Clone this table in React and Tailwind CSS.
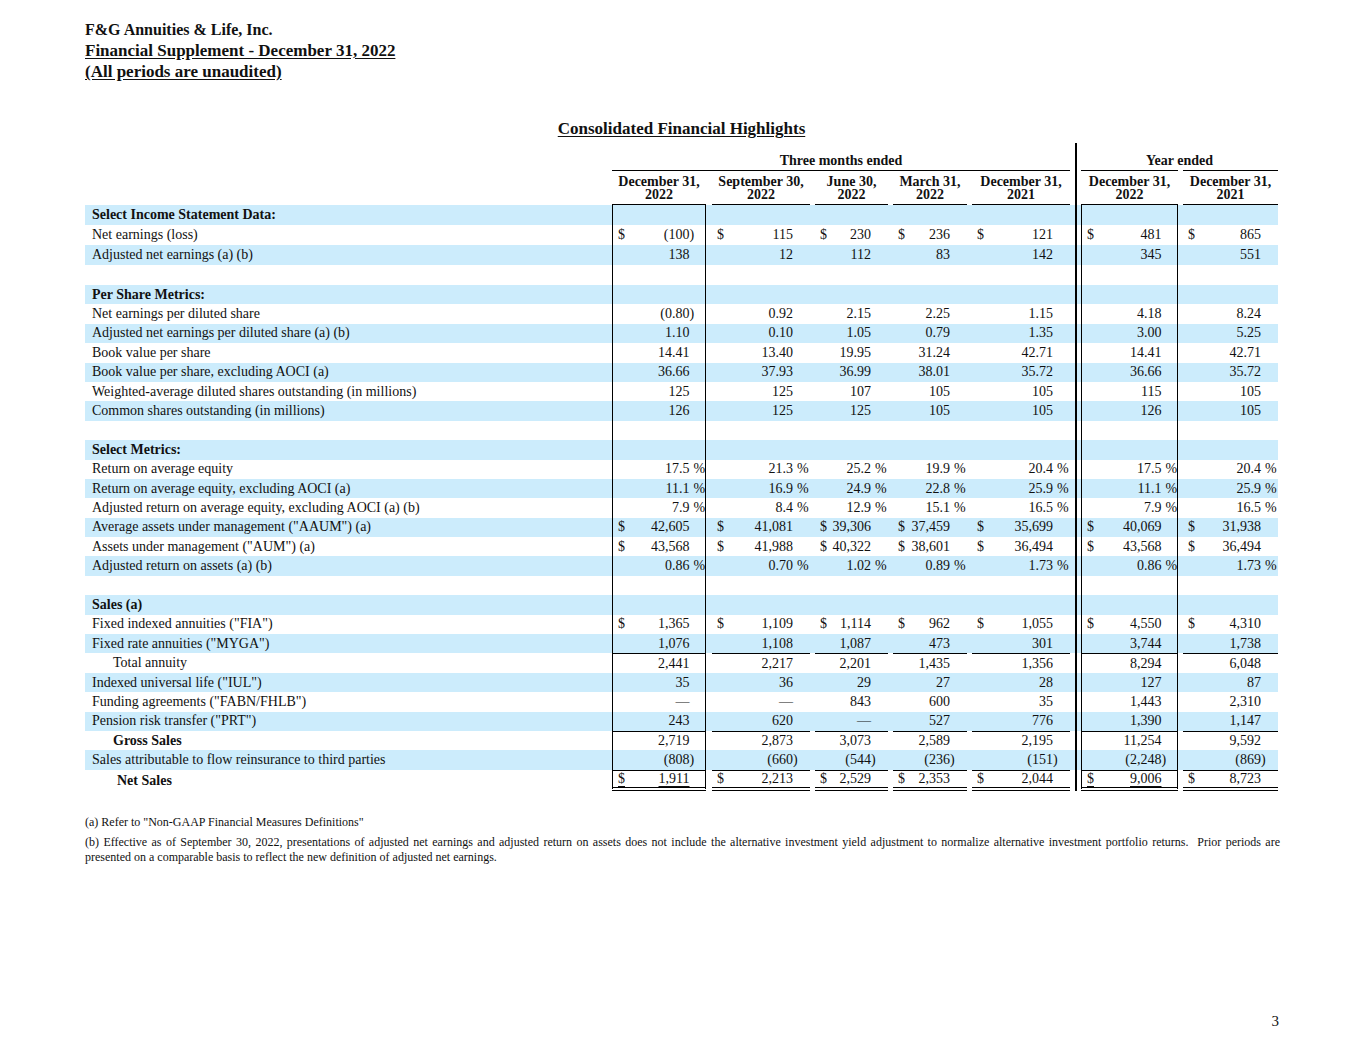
import React from "react";

const cols = [
  { w: "w-[94px]", box: true },
  { w: "w-[98px] ml-[6px]" },
  { w: "w-[73px] ml-[5px]" },
  { w: "w-[74px] ml-[5px]" },
  { w: "w-[98px] ml-[5px]" },
  { w: "w-[97px]", box: true },
  { w: "w-[95px] ml-[5px]" },
];

const heads = [
  ["December 31,", "2022"],
  ["September 30,", "2022"],
  ["June 30,", "2022"],
  ["March 31,", "2022"],
  ["December 31,", "2021"],
  ["December 31,", "2022"],
  ["December 31,", "2021"],
];

const rows = [
  { label: "Select Income Statement Data:", section: true },
  { label: "Net earnings (loss)", dollar: true, vals: ["(100)", "115", "230", "236", "121", "481", "865"] },
  { label: "Adjusted net earnings (a) (b)", vals: ["138", "12", "112", "83", "142", "345", "551"] },
  { label: "" },
  { label: "Per Share Metrics:", section: true },
  { label: "Net earnings per diluted share", vals: ["(0.80)", "0.92", "2.15", "2.25", "1.15", "4.18", "8.24"] },
  { label: "Adjusted net earnings per diluted share (a) (b)", vals: ["1.10", "0.10", "1.05", "0.79", "1.35", "3.00", "5.25"] },
  { label: "Book value per share", vals: ["14.41", "13.40", "19.95", "31.24", "42.71", "14.41", "42.71"] },
  { label: "Book value per share, excluding AOCI (a)", vals: ["36.66", "37.93", "36.99", "38.01", "35.72", "36.66", "35.72"] },
  { label: "Weighted-average diluted shares outstanding (in millions)", vals: ["125", "125", "107", "105", "105", "115", "105"] },
  { label: "Common shares outstanding (in millions)", vals: ["126", "125", "125", "105", "105", "126", "105"] },
  { label: "" },
  { label: "Select Metrics:", section: true },
  { label: "Return on average equity", pct: true, vals: ["17.5", "21.3", "25.2", "19.9", "20.4", "17.5", "20.4"] },
  { label: "Return on average equity, excluding AOCI (a)", pct: true, vals: ["11.1", "16.9", "24.9", "22.8", "25.9", "11.1", "25.9"] },
  { label: "Adjusted return on average equity, excluding AOCI (a) (b)", pct: true, vals: ["7.9", "8.4", "12.9", "15.1", "16.5", "7.9", "16.5"] },
  { label: "Average assets under management (\"AAUM\") (a)", dollar: true, vals: ["42,605", "41,081", "39,306", "37,459", "35,699", "40,069", "31,938"] },
  { label: "Assets under management (\"AUM\") (a)", dollar: true, vals: ["43,568", "41,988", "40,322", "38,601", "36,494", "43,568", "36,494"] },
  { label: "Adjusted return on assets (a) (b)", pct: true, vals: ["0.86", "0.70", "1.02", "0.89", "1.73", "0.86", "1.73"] },
  { label: "" },
  { label: "Sales (a)", section: true },
  { label: "Fixed indexed annuities (\"FIA\")", dollar: true, vals: ["1,365", "1,109", "1,114", "962", "1,055", "4,550", "4,310"] },
  { label: "Fixed rate annuities (\"MYGA\")", vals: ["1,076", "1,108", "1,087", "473", "301", "3,744", "1,738"] },
  { label: "Total annuity", indent: "pl-[28px]", top: true, vals: ["2,441", "2,217", "2,201", "1,435", "1,356", "8,294", "6,048"] },
  { label: "Indexed universal life (\"IUL\")", vals: ["35", "36", "29", "27", "28", "127", "87"] },
  { label: "Funding agreements (\"FABN/FHLB\")", vals: ["—", "—", "843", "600", "35", "1,443", "2,310"] },
  { label: "Pension risk transfer (\"PRT\")", vals: ["243", "620", "—", "527", "776", "1,390", "1,147"] },
  { label: "Gross Sales", indent: "pl-[28px]", bold: true, top: true, vals: ["2,719", "2,873", "3,073", "2,589", "2,195", "11,254", "9,592"] },
  { label: "Sales attributable to flow reinsurance to third parties", vals: ["(808)", "(660)", "(544)", "(236)", "(151)", "(2,248)", "(869)"] },
  { label: "Net Sales", indent: "pl-[32px]", bold: true, top: true, total: true, dollar: true, vals: ["1,911", "2,213", "2,529", "2,353", "2,044", "9,006", "8,723"] },
];

const Sep = () => (
  <div className="w-[11px] flex justify-center shrink-0">
    <div className="w-[2px] bg-black" />
  </div>
);

const NumCell = ({ col, v, row }) => {
  const paren = v && v.endsWith(")");
  const num = paren ? v.slice(0, -1) : v;
  const ul = row.total && col.box ? "underline underline-offset-[3px]" : "";
  return (
    <div className={`${col.w} shrink-0 flex items-center pl-[5px] ${col.box ? "border-x-[1.5px] border-black" : ""} ${row.top ? "border-t-[1.5px] border-black" : ""} ${row.total ? "border-b-[4px] border-black [border-bottom-style:double]" : ""}`}>
      {row.dollar && <span className={ul}>$</span>}
      <span className={`ml-auto ${ul}`}>{num}</span>
      <span className={`${col.box ? "w-[15.5px]" : "w-[17px]"} shrink-0 whitespace-nowrap`}>
        {paren ? ")" : v && row.pct ? <span className="pl-[4px]">%</span> : ""}
      </span>
    </div>
  );
};

export default function App() {
  return (
    <div className="w-[1365px] min-h-[1055px] bg-white text-[#111] font-['Liberation_Serif',serif] pl-[85px] pt-[19px]">
      <div className="leading-[21px] font-bold">
        <div className="text-[16px]">F&amp;G Annuities &amp; Life, Inc.</div>
        <div className="text-[17px] underline underline-offset-2">Financial Supplement - December 31, 2022</div>
        <div className="text-[17px] underline underline-offset-2">(All periods are unaudited)</div>
      </div>

      <div className="w-[1193px] mt-[36px] text-center text-[17px] leading-[21px] font-bold">
        <span className="underline underline-offset-2">Consolidated Financial Highlights</span>
      </div>

      <div className="w-[1193px] text-[14px] mt-[4px]">
        {/* header */}
        <div className="flex h-[62px]">
          <div className="w-[527px] shrink-0" />
          <div className="w-[458px] flex flex-col">
            <div className="h-[26.5px] flex items-end justify-center pb-[2px] leading-[15px] font-bold">Three months ended</div>
            <div className="h-[1.5px] bg-black" />
            <div className="flex flex-1">
              {cols.slice(0, 5).map((c, i) => (
                <div key={i} className={`${c.w} shrink-0 flex flex-col justify-end items-center border-b-[1.5px] border-black pb-[3px] leading-[13px] font-bold whitespace-nowrap`}>
                  <div>{heads[i][0]}</div>
                  <div>{heads[i][1]}</div>
                </div>
              ))}
            </div>
          </div>
          <Sep />
          <div className="w-[197px] flex flex-col">
            <div className="h-[26.5px] flex items-end justify-center pb-[2px] leading-[15px] font-bold">Year ended</div>
            <div className="flex h-[1.5px]">
              <div className="w-[97px] bg-black" />
              <div className="w-[95px] ml-[5px] bg-black" />
            </div>
            <div className="flex flex-1">
              {cols.slice(5).map((c, i) => (
                <div key={i} className={`${c.w} shrink-0 flex flex-col justify-end items-center border-b-[1.5px] border-black pb-[3px] leading-[13px] font-bold whitespace-nowrap`}>
                  <div>{heads[i + 5][0]}</div>
                  <div>{heads[i + 5][1]}</div>
                </div>
              ))}
            </div>
          </div>
        </div>

        {/* body */}
        {rows.map((r, idx) => (
          <div
            key={idx}
            className={`flex leading-[16px] ${idx < 4 ? "h-[20px]" : r.total ? "h-[21.5px]" : "h-[19.4px]"} ${idx % 2 === 0 ? "bg-[#ccecfc]" : "bg-white"}`}
          >
            <div className={`w-[527px] shrink-0 flex items-center ${r.indent || "pl-[7px]"} ${r.section || r.bold ? "font-bold" : ""} whitespace-nowrap`}>
              {r.label}
            </div>
            {cols.slice(0, 5).map((c, i) => (
              <NumCell key={i} col={c} v={r.vals ? r.vals[i] : ""} row={r} />
            ))}
            <Sep />
            {cols.slice(5).map((c, i) => (
              <NumCell key={i} col={c} v={r.vals ? r.vals[i + 5] : ""} row={r} />
            ))}
          </div>
        ))}
      </div>

      <div className="w-[1195px] text-[12px] leading-[15px] mt-[24px]">
        <p>(a) Refer to "Non-GAAP Financial Measures Definitions"</p>
        <p className="mt-[5px] text-justify">
          (b) Effective as of September 30, 2022, presentations of adjusted net earnings and adjusted return on assets does not include the alternative investment yield adjustment to normalize alternative investment portfolio returns.&nbsp; Prior periods are presented on a comparable basis to reflect the new definition of adjusted net earnings.
        </p>
      </div>

      <div className="w-[1195px] text-right text-[15px] leading-[18px] mt-[147px] pr-[1px]">3</div>
    </div>
  );
}
